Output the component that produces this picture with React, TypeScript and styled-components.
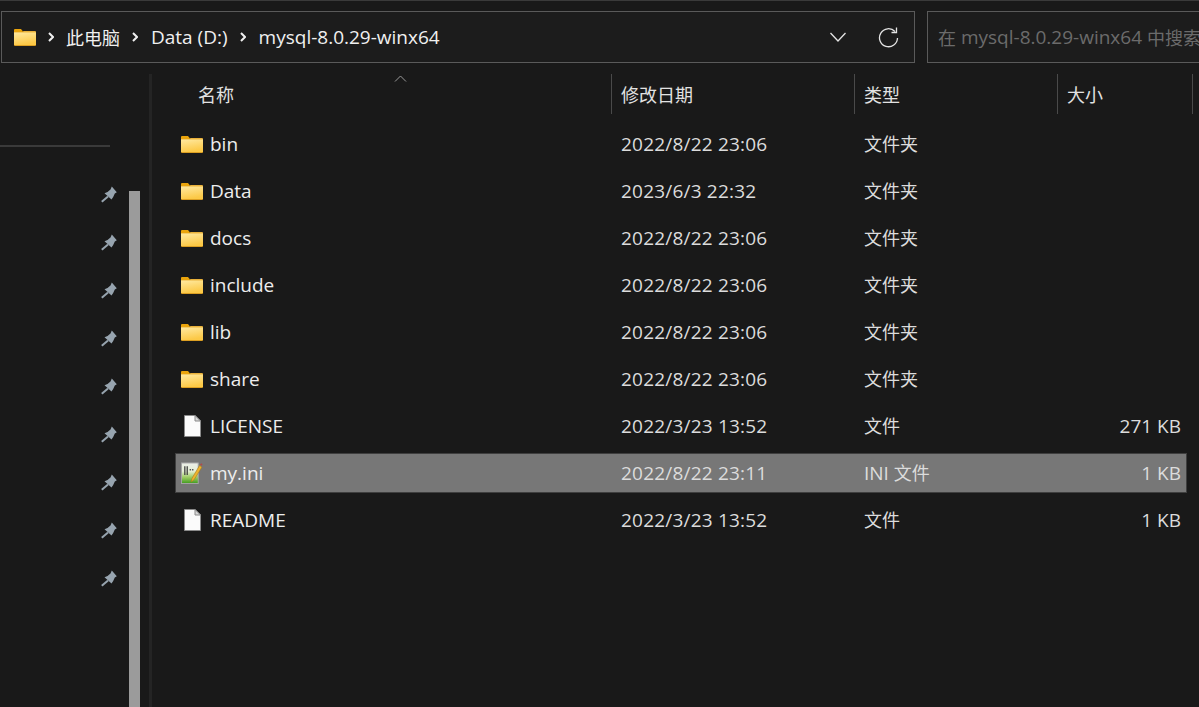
import styled, { createGlobalStyle } from 'styled-components'

const GlobalStyle = createGlobalStyle`
  html, body {
    margin: 0;
    height: 100%;
    background: #191919;
    overflow: hidden;
  }
  #root { height: 100%; }
`

const FONT = `"Open Sans", "Noto Sans CJK SC", sans-serif`

const files = [
  { name: 'bin', date: '2022/8/22 23:06', type: '文件夹', size: '', icon: 'folder' },
  { name: 'Data', date: '2023/6/3 22:32', type: '文件夹', size: '', icon: 'folder' },
  { name: 'docs', date: '2022/8/22 23:06', type: '文件夹', size: '', icon: 'folder' },
  { name: 'include', date: '2022/8/22 23:06', type: '文件夹', size: '', icon: 'folder' },
  { name: 'lib', date: '2022/8/22 23:06', type: '文件夹', size: '', icon: 'folder' },
  { name: 'share', date: '2022/8/22 23:06', type: '文件夹', size: '', icon: 'folder' },
  { name: 'LICENSE', date: '2022/3/23 13:52', type: '文件', size: '271 KB', icon: 'file' },
  { name: 'my.ini', date: '2022/8/22 23:11', type: 'INI 文件', size: '1 KB', icon: 'ini', selected: true },
  { name: 'README', date: '2022/3/23 13:52', type: '文件', size: '1 KB', icon: 'file' },
]

const FolderIcon = () => (
  <svg width="22" height="17" viewBox="0 0 22 17">
    <defs>
      <linearGradient id="folderFill" x1="0" y1="0" x2="0.300" y2="1">
        <stop offset="0" stopColor="#ffe9a0" />
        <stop offset="1" stopColor="#fcc947" />
      </linearGradient>
    </defs>
    <path d="M0 1a1 1 0 0 1 1-1h6l2 2.500v2H0z" fill="#eaa40c" />
    <path d="M0 4V3h8.500l1-1H21a1 1 0 0 1 1 1v1z" fill="#e9b13a" />
    <path d="M0 3.500h22V16H0z" fill="url(#folderFill)" />
    <path d="M0 16h22a1 1 0 0 1-1 1H1a1 1 0 0 1-1-1z" fill="#dc9f22" />
  </svg>
)

const FileIcon = () => (
  <svg width="17" height="22" viewBox="0 0 17 22">
    <path d="M.5.500h10.500l5.500 5.500v15.500H.5z" fill="#fbfbfb" stroke="#8a8a8a" />
    <path d="M11 .5v5.500h5.500z" fill="#d8d8d8" stroke="#8a8a8a" />
  </svg>
)

const IniIcon = () => (
  <svg width="23" height="24" viewBox="0 0 23 24">
    <defs>
      <linearGradient id="iniFill" x1="0" y1="0" x2="0" y2="1">
        <stop offset="0" stopColor="#eceee8" />
        <stop offset="0.400" stopColor="#e6efd6" />
        <stop offset="0.700" stopColor="#9ccb62" />
        <stop offset="1" stopColor="#3f9a1e" />
      </linearGradient>
    </defs>
    <rect x="0.500" y="1.500" width="17.500" height="21.500" fill="url(#iniFill)" stroke="#a6a6a6" />
    <path d="M4 5v9M6.500 5v9" stroke="#3c3c3c" strokeWidth="1.300" />
    <path d="M9 8.500h5" stroke="#555" strokeWidth="1.600" strokeDasharray="1.500 1" />
    <path d="M19.500 4 11.500 17.500l-1 4 3.200-2.500L21.800 6z" fill="#eeb32e" stroke="#a47a18" strokeWidth="0.600" />
    <path d="M20.500 2.500l1.500 1.200" stroke="#b04a4a" strokeWidth="2" />
  </svg>
)

const PinIcon = () => (
  <svg width="16" height="17" viewBox="0 0 16 17">
    <path d="M10.800.6 15.800 6.200 13.800 7.600 12.200 11 10.500 13.500 3.500 7.200 6.500 6 9.500 3.500z" fill="#97a4af" />
    <path d="M7 10.500.8 15.800" stroke="#97a4af" strokeWidth="2" />
  </svg>
)

const ChevronRight = () => (
  <svg width="6" height="10" viewBox="0 0 6 10">
    <path d="M1 1l4 4-4 4" fill="none" stroke="#efefef" strokeWidth="2" />
  </svg>
)

const ICONS: any = { folder: <FolderIcon />, file: <FileIcon />, ini: <IniIcon /> }

const App = () => {
  return (
    <Window>
      <GlobalStyle />
      <TopBar>
        <AddressBar>
          <FolderIcon />
          <Crumb>
            <ChevronRight />
            <Cjk>此电脑</Cjk>
          </Crumb>
          <Crumb>
            <ChevronRight />
            <span>Data (D:)</span>
          </Crumb>
          <Crumb>
            <ChevronRight />
            <span>mysql-8.0.29-winx64</span>
          </Crumb>
          <AddressActions>
            <svg width="16" height="10" viewBox="0 0 16 10">
              <path d="M.5 1l7.500 8 7.500-8" fill="none" stroke="#e4e4e4" strokeWidth="1.300" />
            </svg>
            <svg width="21" height="21" viewBox="0 0 21 21">
              <path d="M17 4.500A9 9 0 1 0 19.500 11" fill="none" stroke="#e4e4e4" strokeWidth="1.300" />
              <path d="M18.500.5v5h-5" fill="none" stroke="#e4e4e4" strokeWidth="1.300" />
            </svg>
          </AddressActions>
        </AddressBar>
        <SearchBar>
          <Cjk>在</Cjk>&nbsp;mysql-8.0.29-winx64&nbsp;<Cjk>中搜索</Cjk>
        </SearchBar>
      </TopBar>
      <Body>
        <Sidebar>
          <SideRule />
          <PinList>
            {Array.from({ length: 9 }).map((_, i) => (
              <PinIcon key={i} />
            ))}
          </PinList>
          <ScrollThumb />
        </Sidebar>
        <Splitter />
        <Content>
          <Header>
            <SortCaret width="13" height="7" viewBox="0 0 13 7">
              <path d="M1 6.500l5.500-5.500 5.500 5.500" fill="none" stroke="#9a9a9a" />
            </SortCaret>
            <HeadCell $width={436} $pad={23}>名称</HeadCell>
            <HeadCell $width={243} $pad={9} $divider>修改日期</HeadCell>
            <HeadCell $width={203} $pad={9} $divider>类型</HeadCell>
            <HeadCell $width={136} $pad={9} $divider $closed>大小</HeadCell>
          </Header>
          <Rows>
            {files.map((f) => (
              <Row key={f.name} $selected={f.selected}>
                <NameCell>
                  <IconSlot>{ICONS[f.icon]}</IconSlot>
                  <span>{f.name}</span>
                </NameCell>
                <DateCell>{f.date}</DateCell>
                <TypeCell>
                  {f.type.startsWith('INI') ? (
                    <>
                      INI <Cjk>文件</Cjk>
                    </>
                  ) : (
                    <Cjk>{f.type}</Cjk>
                  )}
                </TypeCell>
                <SizeCell>{f.size}</SizeCell>
              </Row>
            ))}
          </Rows>
        </Content>
      </Body>
    </Window>
  )
}

export default App

const Window = styled.div`
  height: 100vh;
  display: flex;
  flex-direction: column;
  background: #191919;
  border-top: 1px solid #3a3a3a;
  box-sizing: border-box;
  font-family: ${FONT};
  font-size: 19px;
  color: #ededed;
  overflow: hidden;
`

const Cjk = styled.span`
  font-size: 18px;
`

const TopBar = styled.div`
  display: flex;
  gap: 12px;
  padding: 10px 0 0 1px;
  flex: none;
`

const AddressBar = styled.div`
  width: 914px;
  height: 52px;
  flex: none;
  box-sizing: border-box;
  border: 1px solid #5a5a5a;
  background: #1c1c1c;
  display: flex;
  align-items: center;
  padding-left: 12px;
  color: #f0f0f0;
`

const Crumb = styled.div`
  display: flex;
  align-items: center;
  gap: 13px;
  margin-left: 12px;
  white-space: nowrap;

  &:first-of-type {
    gap: 12px;
  }
`

const AddressActions = styled.div`
  margin-left: auto;
  display: flex;
  align-items: center;
  gap: 32px;
  padding-right: 15px;
`

const SearchBar = styled.div`
  flex: 1;
  min-width: 0;
  height: 52px;
  box-sizing: border-box;
  border: 1px solid #5a5a5a;
  border-right: none;
  background: #1c1c1c;
  display: flex;
  align-items: center;
  padding-left: 10px;
  color: #6b6b6b;
  white-space: nowrap;
  overflow: hidden;
`

const Body = styled.div`
  flex: 1;
  display: flex;
  margin-top: 11px;
  min-height: 0;
`

const Sidebar = styled.div`
  width: 149px;
  flex: none;
  position: relative;
`

const SideRule = styled.div`
  width: 110px;
  height: 2px;
  margin-top: 71px;
  background: #3a3a3a;
`

const PinList = styled.div`
  display: flex;
  flex-direction: column;
  gap: 31px;
  margin: 39px 0 0 101px;
`

const ScrollThumb = styled.div`
  position: absolute;
  left: 129px;
  top: 117px;
  bottom: 0;
  width: 11px;
  background: #9b9b9b;
`

const Splitter = styled.div`
  width: 3px;
  flex: none;
  background: #242424;
`

const Content = styled.div`
  flex: 1;
  min-width: 0;
`

const Header = styled.div`
  position: relative;
  display: flex;
  height: 40px;
  color: #e2e2e2;
  font-size: 18px;
`

const SortCaret = styled.svg`
  position: absolute;
  left: 242px;
  top: 1px;
`

const HeadCell = styled.div<{ $width: number; $pad: number; $divider?: boolean; $closed?: boolean }>`
  width: ${(p) => p.$width}px;
  flex: none;
  box-sizing: border-box;
  padding-left: ${(p) => p.$pad}px;
  display: flex;
  align-items: center;
  border-left: ${(p) => (p.$divider ? '1px solid #4a4a4a' : 'none')};
  border-right: ${(p) => (p.$closed ? '1px solid #4a4a4a' : 'none')};
  margin-left: ${(p) => (p.$divider ? '0' : '23px')};
`

const Rows = styled.div`
  display: flex;
  flex-direction: column;
  gap: 7px;
  margin-top: 10px;
  padding-left: 23px;
`

const Row = styled.div<{ $selected?: boolean }>`
  width: 1012px;
  height: 40px;
  box-sizing: border-box;
  display: flex;
  align-items: center;
  background: ${(p) => (p.$selected ? '#777777' : 'transparent')};
  border: 1px solid ${(p) => (p.$selected ? '#3f3f3f' : 'transparent')};
`

const NameCell = styled.div`
  width: 436px;
  flex: none;
  display: flex;
  align-items: center;
  padding-left: 5px;
  box-sizing: border-box;
  gap: 7px;
`

const IconSlot = styled.div`
  width: 22px;
  height: 24px;
  display: flex;
  align-items: center;
  justify-content: center;
`

const DateCell = styled.div`
  width: 243px;
  flex: none;
  padding-left: 9px;
  box-sizing: border-box;
  color: #dcdcdc;
  letter-spacing: 0.2px;
`

const TypeCell = styled.div`
  width: 203px;
  flex: none;
  padding: 0 0 2px 9px;
  box-sizing: border-box;
  color: #dcdcdc;
`

const SizeCell = styled.div`
  width: 123px;
  flex: none;
  text-align: right;
  color: #dcdcdc;
`
